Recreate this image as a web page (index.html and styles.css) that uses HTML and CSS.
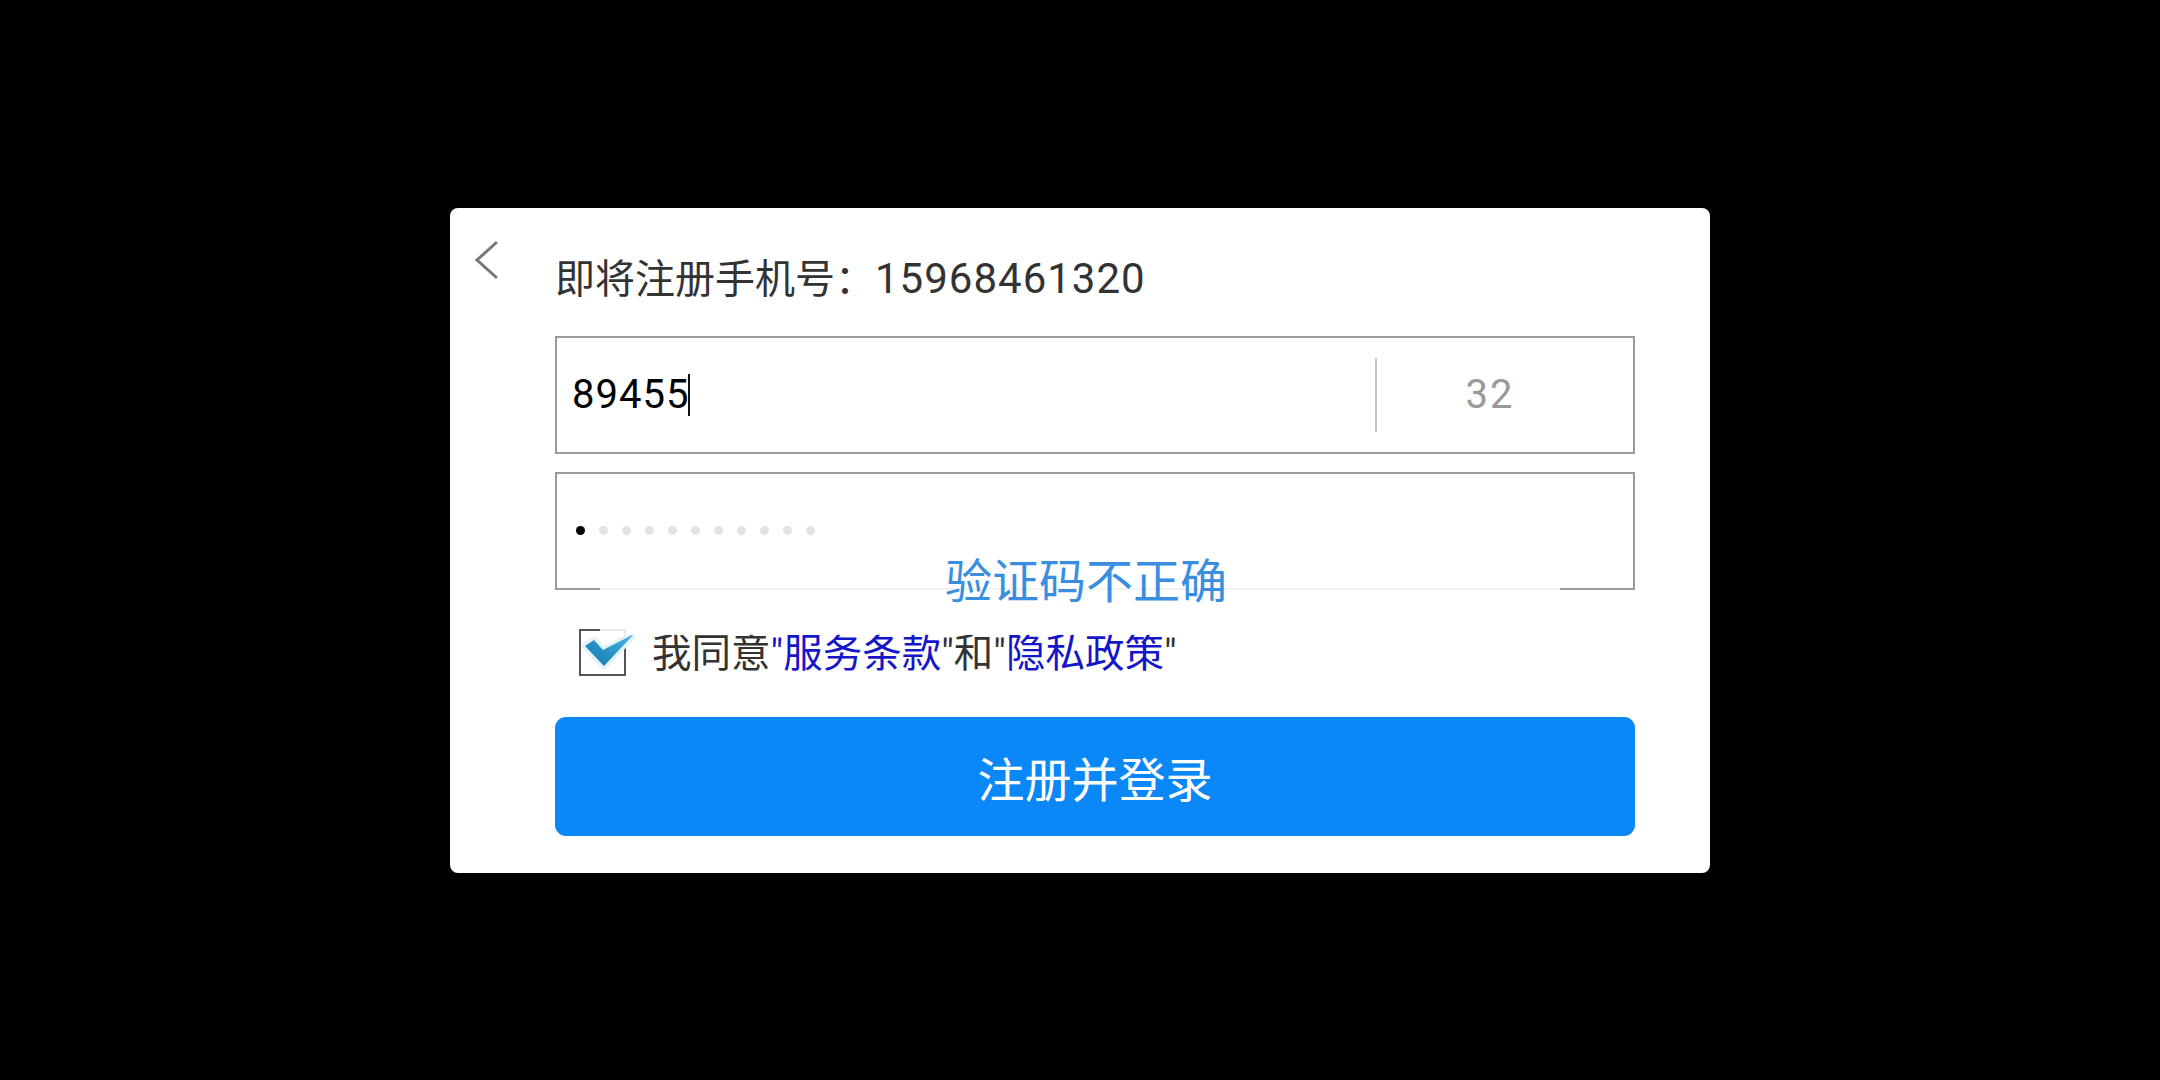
FILE: index.html
```html
<!DOCTYPE html>
<html lang="zh-CN">
<head>
<meta charset="utf-8">
<title>注册</title>
<link rel="stylesheet" href="styles.css">
</head>
<body>
<div class="dialog">
  <div class="back">
    <svg viewBox="0 0 26 42" aria-hidden="true"><polyline points="22,2 2,20 22,38" fill="none" stroke="#777" stroke-width="3"/></svg>
  </div>
  <div class="content">
    <div class="title">即将注册手机号：<span class="phone">15968461320</span></div>
    <div class="field code-field">
      <div class="code-input"><span class="code-text">89455</span><span class="caret"></span></div>
      <div class="divider"></div>
      <div class="countdown">32</div>
    </div>
    <div class="field pwd-field">
      <span class="dot on"></span><span class="dot"></span><span class="dot"></span><span class="dot"></span><span class="dot"></span><span class="dot"></span><span class="dot"></span><span class="dot"></span><span class="dot"></span><span class="dot"></span><span class="dot"></span>
    </div>
    <div class="agree">
      <svg class="check" viewBox="0 0 56 48" aria-hidden="true">
        <defs>
          <linearGradient id="cg" x1="1" y1="0" x2="0" y2="1">
            <stop offset="0" stop-color="#45b6e6"/>
            <stop offset="1" stop-color="#1276aa"/>
          </linearGradient>
        </defs>
        <rect x="1" y="1" width="45" height="45" fill="none" stroke="#555" stroke-width="2"/>
        <polygon points="6,17 15,11 24,21 55,5 25,37" fill="#e4f3fb" stroke="#e4f3fb" stroke-width="7" stroke-linejoin="round"/>
        <polygon points="6,17 15,11 24,21 55,5 25,37" fill="url(#cg)"/>
      </svg>
      <span class="agree-text">我同意<span class="link">"服务条款</span>"和"<span class="link">隐私政策</span>"</span>
    </div>
    <button class="submit" type="button">注册并登录</button>
  </div>
  <div class="toast">验证码不正确</div>
</div>
</body>
</html>
```

FILE: styles.css
```css
html, body {
  margin: 0;
  height: 100%;
  background: #000;
}

body {
  display: flex;
  align-items: center;
  justify-content: center;
  font-family: Roboto, "Noto Sans CJK SC", sans-serif;
}

.dialog {
  position: relative;
  display: flex;
  width: 1260px;
  height: 665px;
  background: #fff;
  border-radius: 8px;
  box-sizing: border-box;
}

.back {
  flex: none;
  width: 105px;
  padding: 32px 0 0 25px;
  box-sizing: border-box;
}

.back svg {
  display: block;
  width: 26px;
  height: 42px;
}

.content {
  width: 1080px;
  padding-top: 43px;
  display: flex;
  flex-direction: column;
}

.title {
  height: 56px;
  line-height: 56px;
  font-size: 40px;
  color: #333;
  white-space: nowrap;
}

.phone {
  font-size: 42px;
  letter-spacing: 1px;
}

.field {
  box-sizing: border-box;
  height: 118px;
  border: 2px solid #9a9a9a;
  display: flex;
  align-items: center;
}

.code-field {
  margin-top: 29px;
  padding-left: 15px;
}

.code-input {
  flex: 1;
  display: flex;
  align-items: center;
  font-size: 40px;
  color: #000;
}

.code-text {
  letter-spacing: 1px;
}

.caret {
  width: 2px;
  height: 42px;
  margin-left: -1px;
  background: #111;
}

.divider {
  width: 2px;
  height: 74px;
  background: #c4c4c4;
}

.countdown {
  width: 226px;
  margin-right: 30px;
  text-align: center;
  font-size: 40px;
  color: #999;
  letter-spacing: 2px;
}

.pwd-field {
  margin-top: 18px;
  padding-left: 19px;
  gap: 14px;
}

.dot {
  width: 9px;
  height: 9px;
  border-radius: 50%;
  background: #e3e3e3;
}

.dot.on {
  background: #000;
}

.agree {
  margin-top: 40px;
  height: 47px;
  display: flex;
  align-items: center;
  padding-left: 24px;
}

.check {
  flex: none;
  width: 56px;
  height: 48px;
  margin-right: 17px;
}

.agree-text {
  font-size: 39.5px;
  line-height: 47px;
  color: #333;
  white-space: nowrap;
}

.link {
  color: #1515c9;
}

.submit {
  margin-top: 40px;
  height: 119px;
  width: 100%;
  padding: 0;
  border: 0;
  border-radius: 11px;
  background: #0a88f8;
  color: #fff;
  font-family: inherit;
  font-size: 47px;
}

.toast {
  position: absolute;
  left: 150px;
  top: 333px;
  width: 960px;
  height: 94px;
  padding: 0 0 20px 12px;
  box-sizing: border-box;
  background: rgba(255, 255, 255, 0.87);
  display: flex;
  align-items: center;
  justify-content: center;
  font-size: 47px;
  color: #3a8ee0;
}
```
